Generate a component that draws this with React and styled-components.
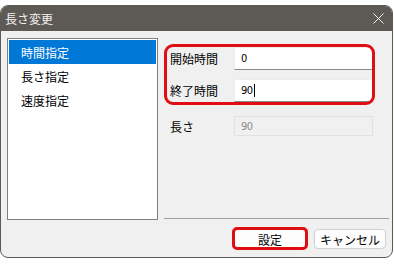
import React from "react";
import styled, { createGlobalStyle } from "styled-components";

const Global = createGlobalStyle`
  html, body { margin: 0; padding: 0; background: #ffffff; }
  body { font-family: "Noto Sans CJK JP", "Noto Sans", sans-serif; }
`;

const Win = styled.div`
  position: relative;
  box-sizing: border-box;
  margin-top: 5px;
  width: 393px;
  height: 253px;
  border: 1px solid #5d5955;
  border-radius: 8px 8px 8px 8px;
  overflow: hidden;
  background: #f0f0f0;
  display: flex;
  flex-direction: column;
  font-size: 12px;
  color: #000;
`;

const TitleBar = styled.div`
  height: 25px;
  flex: none;
  background: #5d5955;
  display: flex;
  align-items: center;
  justify-content: space-between;
  padding: 0 8px 0 4px;
  color: #f2f2f2;
  font-size: 12px;
`;

const Body = styled.div`
  flex: 1;
  display: flex;
  flex-direction: column;
  padding: 7px 3px 0 6px;
`;

const Main = styled.div`
  display: flex;
  gap: 6px;
`;

const ListBox = styled.div`
  box-sizing: border-box;
  width: 151px;
  height: 182px;
  border: 1px solid #7f7f7f;
  background: #fff;
  padding: 1px;
  display: flex;
  flex-direction: column;
`;

const ListItem = styled.div`
  height: 24px;
  display: flex;
  align-items: center;
  padding-left: 12px;
  background: ${(p) => (p.$selected ? "#0078d7" : "transparent")};
  color: ${(p) => (p.$selected ? "#fff" : "#000")};
`;

const RightPanel = styled.div`
  box-sizing: border-box;
  width: 225px;
  height: 181px;
  border-bottom: 1px solid #a0a0a0;
  padding: 9px 0 0 6px;
  display: flex;
  flex-direction: column;
`;

const Row = styled.div`
  display: flex;
  align-items: center;
  height: ${(p) => p.$h}px;
  margin-bottom: ${(p) => p.$mb}px;
`;

const Label = styled.div`
  width: 64px;
  flex: none;
`;

const Input = styled.div`
  box-sizing: border-box;
  width: 139px;
  height: 100%;
  display: flex;
  align-items: center;
  padding-left: 6px;
  background: ${(p) => (p.$disabled ? "#f0f0f0" : "#ffffff")};
  border: 1px solid ${(p) => (p.$disabled ? "#e2e2e2" : "#ececec")};
  border-bottom-color: ${(p) => (p.$disabled ? "#e2e2e2" : "#8a8a8a")};
  color: ${(p) => (p.$disabled ? "#8d8d8d" : "#000")};
  letter-spacing: -0.5px;
  font-family: "DejaVu Sans Condensed", "Noto Sans CJK JP", sans-serif;
  font-size: 11px;
`;

const Caret = styled.span`
  display: inline-block;
  width: 1px;
  height: 13px;
  background: #000;
  margin-left: 1px;
`;

const Buttons = styled.div`
  display: flex;
  justify-content: flex-end;
  gap: 8px;
  padding: 9px 3px 0 0;
`;

const Button = styled.div`
  box-sizing: border-box;
  width: 72px;
  height: 20px;
  display: flex;
  align-items: center;
  justify-content: center;
  background: #fdfdfd;
  border: 1px solid #d0d0d0;
  border-radius: 4px;
  font-size: 12px;
`;

const Mark = styled.div`
  position: absolute;
  left: ${(p) => p.$x}px;
  top: ${(p) => p.$y}px;
  width: ${(p) => p.$w}px;
  height: ${(p) => p.$h}px;
  box-sizing: border-box;
  border: 3px solid #e00d12;
  border-radius: ${(p) => p.$r}px;
  pointer-events: none;
`;

const CloseIcon = () => (
  <svg width="11" height="11" viewBox="0 0 11 11">
    <path d="M0.5 0.5 L10.5 10.5 M10.5 0.5 L0.5 10.5" stroke="#f0f0f0" strokeWidth="1" />
  </svg>
);

export default function App() {
  return (
    <>
      <Global />
      <Win>
        <TitleBar>
          <span>長さ変更</span>
          <CloseIcon />
        </TitleBar>
        <Body>
          <Main>
            <ListBox>
              <ListItem $selected>時間指定</ListItem>
              <ListItem>長さ指定</ListItem>
              <ListItem>速度指定</ListItem>
            </ListBox>
            <RightPanel>
              <Row $h={23} $mb={9}>
                <Label>開始時間</Label>
                <Input>0</Input>
              </Row>
              <Row $h={23} $mb={14}>
                <Label>終了時間</Label>
                <Input>
                  90<Caret />
                </Input>
              </Row>
              <Row $h={20} $mb={0}>
                <Label>長さ</Label>
                <Input $disabled>90</Input>
              </Row>
            </RightPanel>
          </Main>
          <Buttons>
            <Button>設定</Button>
            <Button>キャンセル</Button>
          </Buttons>
        </Body>
        <Mark $x={163} $y={38} $w={211} $h={61} $r={9} />
        <Mark $x={231} $y={221} $w={76} $h={23} $r={5} />
      </Win>
    </>
  );
}
